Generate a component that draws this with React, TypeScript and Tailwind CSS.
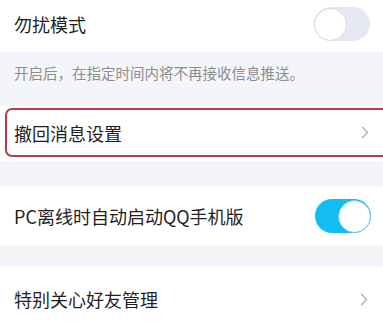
import React from "react";

function Toggle({ on }: { on: boolean }) {
  return (
    <div
      className={
        "w-[56px] h-[34px] rounded-full flex items-center " +
        (on ? "bg-[#12bdf4] justify-end" : "bg-[#e7e9f2] justify-start")
      }
    >
      <div
        className={
          "w-[33px] h-[33px] rounded-full bg-white border-[1.5px] " +
          (on ? "border-[#5fcdf2]" : "border-[#d9d9dd]")
        }
      />
    </div>
  );
}

function Chevron() {
  return (
    <svg width="8" height="13" viewBox="0 0 8 13" fill="none">
      <path d="M1.5 1.2l5 5.3-5 5.3" stroke="#b3b3b3" strokeWidth={1.4} strokeLinecap="round" strokeLinejoin="round" />
    </svg>
  );
}

export default function App() {
  return (
    <div
      className="w-[383px] h-[326px] overflow-hidden bg-white text-[#1f1f1f]"
      style={{ fontFamily: '"Noto Sans CJK SC", "Noto Sans", sans-serif' }}
    >
      {/* 勿扰模式 */}
      <div className="h-[52px] flex items-center justify-between pl-[14px] pr-[13px] pb-[4px]">
        <span className="text-[18px] leading-[24px]">勿扰模式</span>
        <Toggle on={false} />
      </div>

      {/* hint */}
      <div className="h-[54px] bg-[#f4f5f9] pl-[14px] pt-[11px]">
        <p className="text-[14.5px] leading-[20px] text-[#8d8d90]">开启后，在指定时间内将不再接收信息推送。</p>
      </div>

      {/* 撤回消息设置 (highlighted) */}
      <div className="h-[55px] bg-white pt-[2px] overflow-hidden">
        <div className="h-[49px] ml-[5px] mr-[-6px] border-2 border-[#bc3a4b] rounded-[7px] flex items-center justify-between pl-[7px] pr-[18px]">
          <span className="text-[18px] leading-[24px]">撤回消息设置</span>
          <Chevron />
        </div>
      </div>

      <div className="h-[26px] bg-[#f4f5f9]" />

      {/* PC离线时自动启动QQ手机版 */}
      <div className="h-[58px] flex items-center justify-between pl-[14px] pr-[12px]">
        <span className="text-[18px] leading-[24px]">PC离线时自动启动QQ手机版</span>
        <Toggle on={true} />
      </div>

      <div className="h-[22px] bg-[#f4f5f9]" />

      {/* 特别关心好友管理 */}
      <div className="h-[64px] flex items-center justify-between pl-[14px] pr-[15px]">
        <span className="text-[18px] leading-[24px]">特别关心好友管理</span>
        <Chevron />
      </div>
    </div>
  );
}
